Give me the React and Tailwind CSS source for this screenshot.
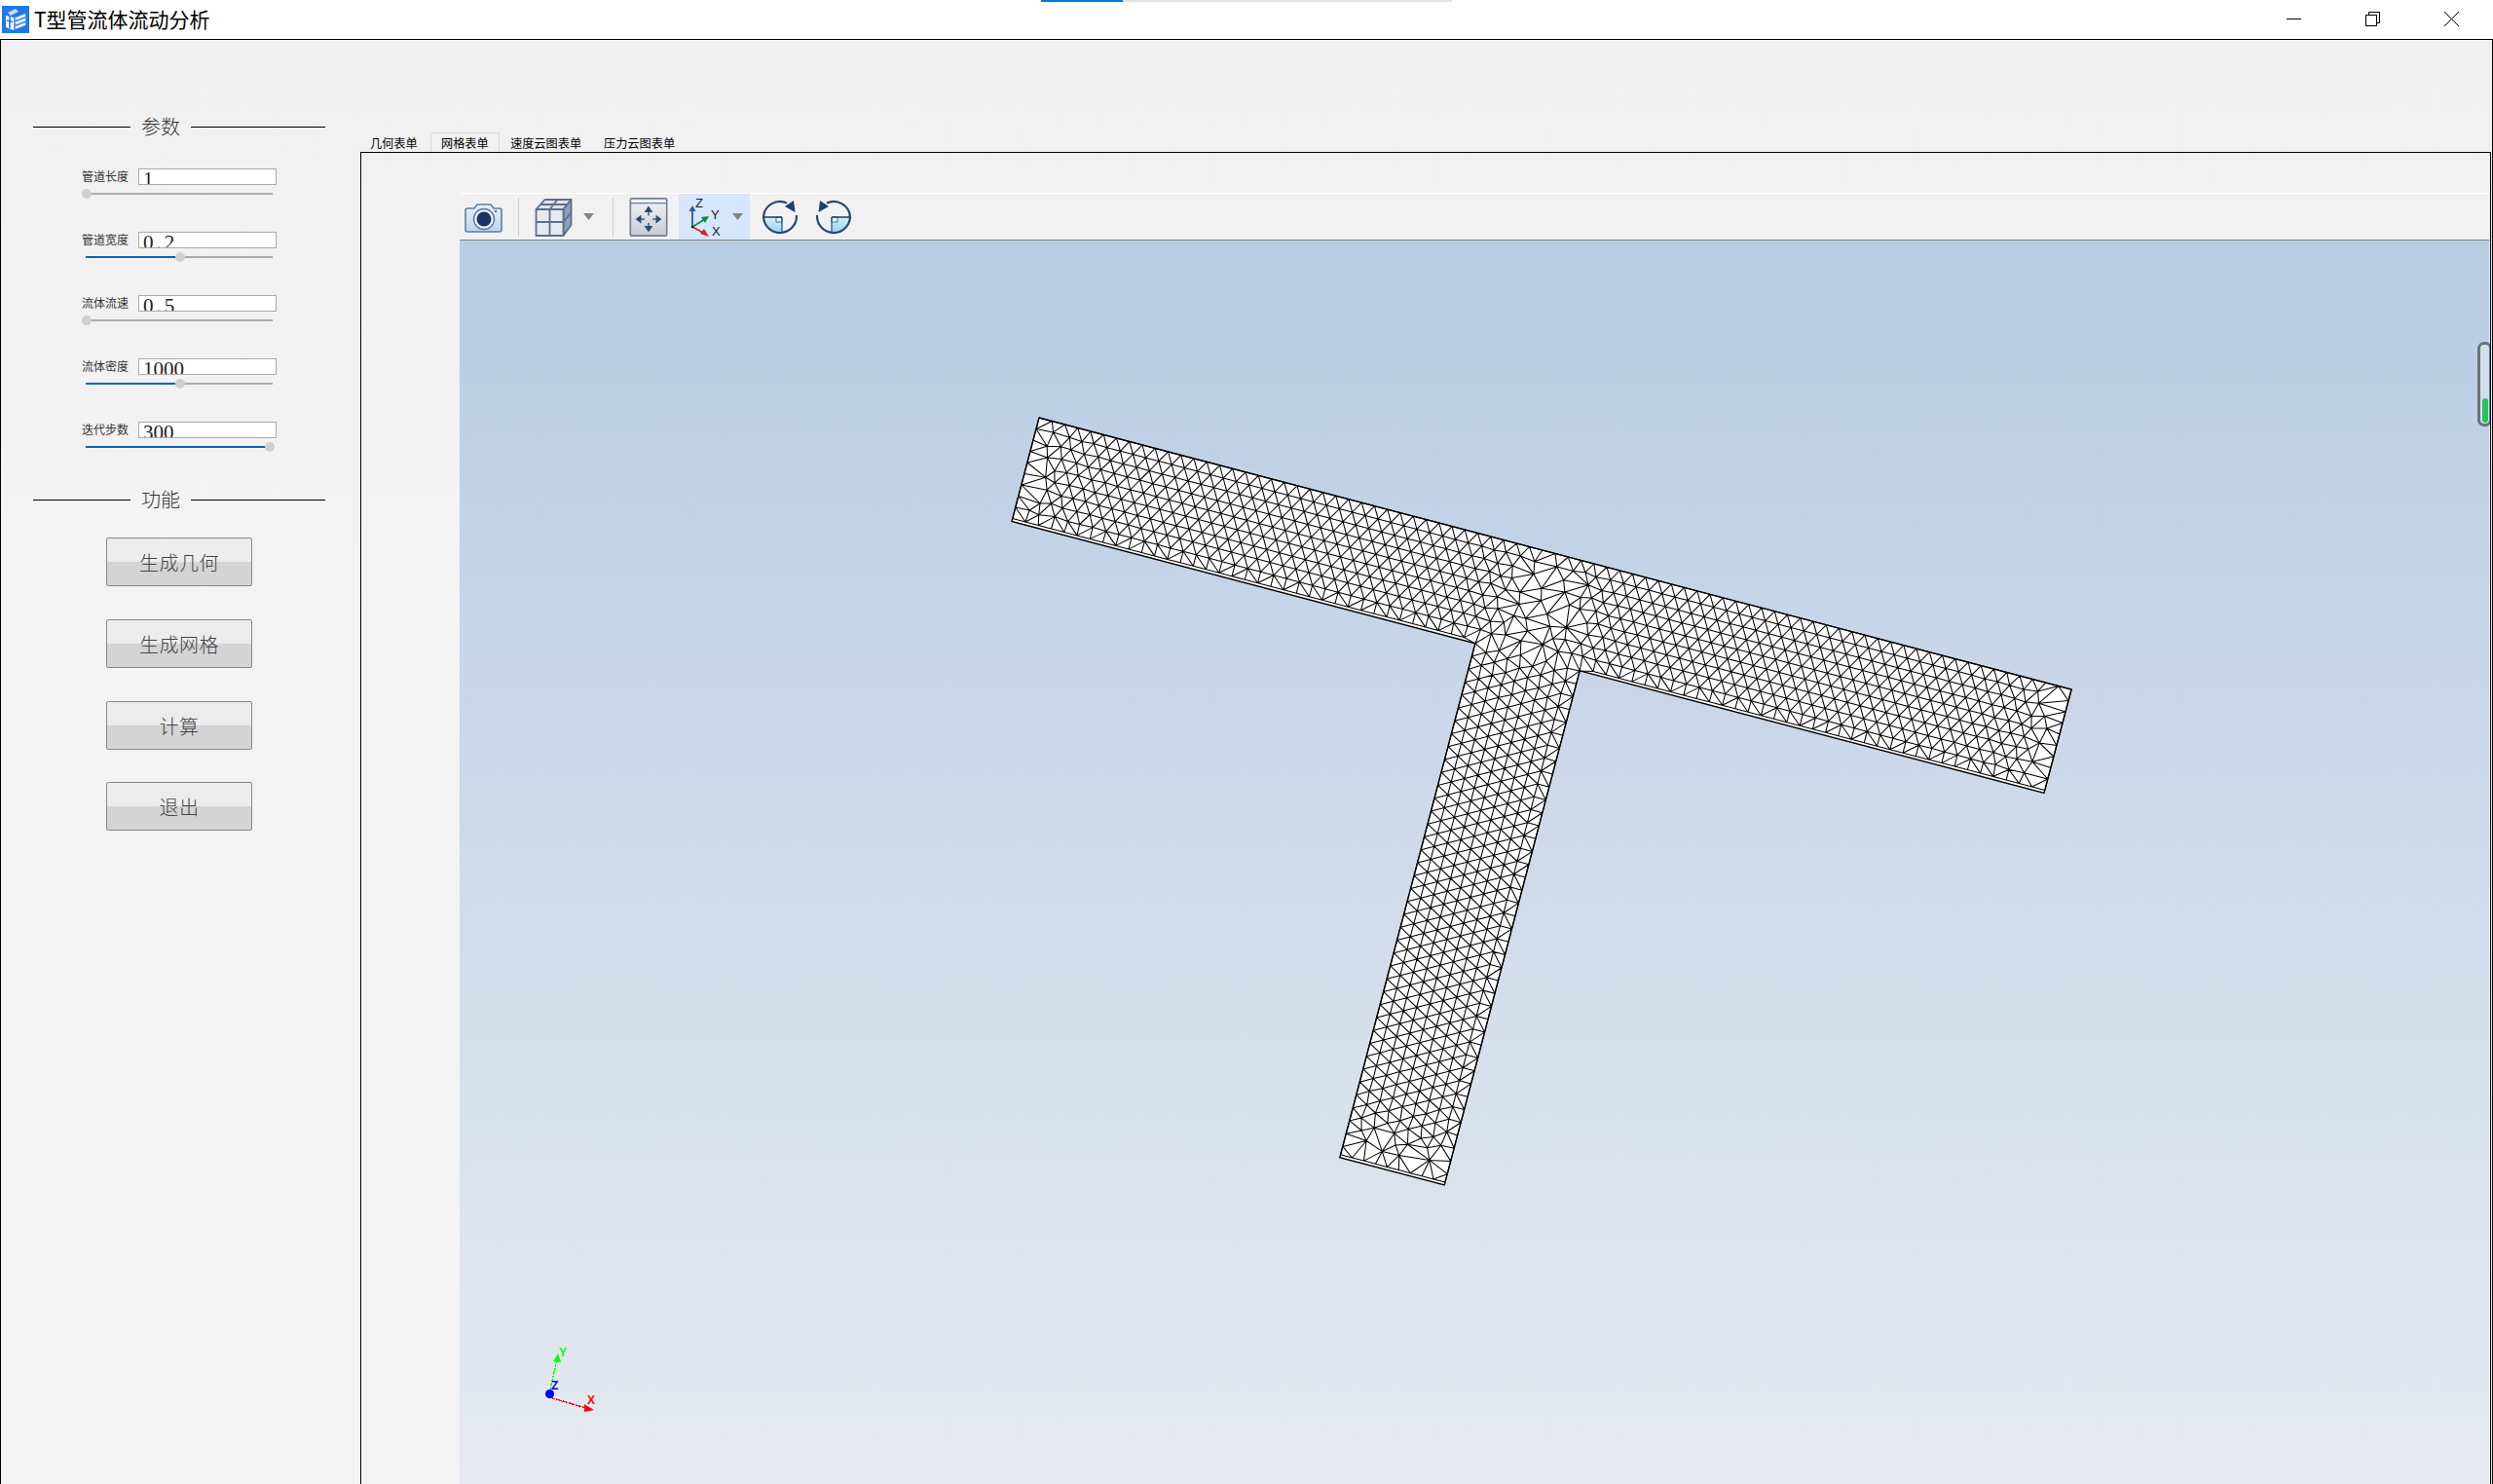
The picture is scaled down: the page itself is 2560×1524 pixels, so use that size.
import React, { useMemo } from "react";

const O = [1067, 429];
const U = [0.9672, 0.2546];
const V = [-0.2546, 0.9672];
const toXY = (u, v) => [O[0] + u * U[0] + v * V[0], O[1] + u * U[1] + v * V[1]];
const L = 1096, W = 110, S0 = 492, S1 = 603, SB = 656;
const STEP = 13.7;

function buildMesh() {
  const pts = [];
  const add = (u, v, minD) => {
    for (const p of pts) {
      const dx = p[0] - u, dy = p[1] - v;
      if (dx * dx + dy * dy < minD * minD) return;
    }
    pts.push([u, v]);
  };
  const rowH = 107 / 9;
  const stemStep = (S1 - S0) / 9;
  for (let u = 0; u <= L + 0.1; u += STEP) add(u, 0, 4);
  for (let u = 0; u <= L; u += STEP) if (u < S0 - 8 || u > S1 + 8) add(u, 107, 4);
  add(S0, W, 1); add(S1, W, 1);
  for (let j = 0; j <= 9; j++) { add(0, j * rowH, 4); add(L, j * rowH, 4); }
  for (let v = W + STEP; v < 653; v += STEP) { add(S0, v, 4); add(S1, v, 4); }
  for (let i = 0; i <= 9; i++) add(S0 + i * stemStep, 653, 4);
  const zone = (u, v) => {
    const dj = Math.hypot(u - (S0 + S1) / 2, (v - W / 2) * 0.9);
    const j = Math.exp(-Math.pow(dj / 58, 2));
    const e = Math.max(Math.exp(-u / 32), Math.exp(-(L - u) / 32), v > W ? Math.exp(-(653 - v) / 32) : 0);
    return [j, e];
  };
  const inner = (u, v) => {
    const [j, e] = zone(u, v);
    const a = 4 * j + 5.5 * e;
    const uu = u + a * Math.sin(u * 0.13 + v * 0.21);
    const vv = v + a * 0.7 * Math.cos(u * 0.17 - v * 0.11);
    add(uu, vv, 9.5 + 2.2 * j + 2 * e);
  };
  for (let j = 1; j < 9; j++) {
    const off = j % 2 ? STEP / 2 : 0;
    for (let u = off + STEP; u < L - 4; u += STEP) inner(u, j * rowH);
  }
  for (let i = 1; i < 9; i++) {
    const off = i % 2 ? STEP / 2 : 0;
    for (let v = W + off; v < 646; v += STEP) inner(S0 + i * stemStep, v);
  }
  const P = pts.map((p, i) => [p[0] + ((i * 7) % 11) * 1e-3, p[1] + ((i * 13) % 7) * 1e-3]);
  const n = P.length;
  P.push([-5000, -5000], [8000, -5000], [500, 9000]);
  const circ = (a, b, c) => {
    const [ax, ay] = P[a], [bx, by] = P[b], [cx, cy] = P[c];
    const d = 2 * (ax * (by - cy) + bx * (cy - ay) + cx * (ay - by));
    const A = ax * ax + ay * ay, B = bx * bx + by * by, C = cx * cx + cy * cy;
    const x = (A * (by - cy) + B * (cy - ay) + C * (ay - by)) / d;
    const y = (A * (cx - bx) + B * (ax - cx) + C * (bx - ax)) / d;
    return { a, b, c, x, y, r: (ax - x) ** 2 + (ay - y) ** 2 };
  };
  let tris = [circ(n, n + 1, n + 2)];
  for (let i = 0; i < n; i++) {
    const [px, py] = P[i];
    const keep = [];
    const edges = new Map();
    for (const t of tris) {
      if ((px - t.x) ** 2 + (py - t.y) ** 2 < t.r) {
        for (const [s, e] of [[t.a, t.b], [t.b, t.c], [t.c, t.a]]) {
          const k = s < e ? s * 100000 + e : e * 100000 + s;
          if (edges.has(k)) edges.set(k, null);
          else edges.set(k, [s, e]);
        }
      } else keep.push(t);
    }
    for (const ed of edges.values()) if (ed) keep.push(circ(ed[0], ed[1], i));
    tris = keep;
  }
  const inside = (u, v) =>
    (u >= 0 && u <= L && v >= 0 && v <= W) || (u >= S0 && u <= S1 && v >= W - 1 && v <= SB);
  const seen = new Set();
  let d = "";
  for (const t of tris) {
    if (t.a >= n || t.b >= n || t.c >= n) continue;
    const a = P[t.a], b = P[t.b], c = P[t.c];
    const area = Math.abs((b[0] - a[0]) * (c[1] - a[1]) - (c[0] - a[0]) * (b[1] - a[1])) / 2;
    if (area < 6) continue;
    if (!inside((a[0] + b[0] + c[0]) / 3, (a[1] + b[1] + c[1]) / 3)) continue;
    for (const [s, e] of [[t.a, t.b], [t.b, t.c], [t.c, t.a]]) {
      const k = s < e ? s * 100000 + e : e * 100000 + s;
      if (seen.has(k)) continue;
      seen.add(k);
      const p = toXY(P[s][0], P[s][1]), q = toXY(P[e][0], P[e][1]);
      d += `M${p[0].toFixed(1)} ${p[1].toFixed(1)}L${q[0].toFixed(1)} ${q[1].toFixed(1)}`;
    }
  }
  return d;
}

const outline = [[0, 0], [L, 0], [L, W], [S1, W], [S1, SB], [S0, SB], [S0, W], [0, W]]
  .map(([u, v]) => toXY(u, v).map((n) => n.toFixed(1)).join(","))
  .join(" ");

function Viewport() {
  const mesh = useMemo(buildMesh, []);
  return (
    <svg className="absolute inset-0 w-full h-full" viewBox="472 247 2084 1277">
      <polygon points={outline} fill="#ffffff" stroke="#000000" strokeWidth="1.4" />
      <path d={mesh} fill="none" stroke="#000000" strokeWidth="1.05" />
      <g shapeRendering="crispEdges">
        <line x1="564" y1="1431" x2="572" y2="1396" stroke="#00ff00" strokeWidth="1.4" strokeDasharray="3 1" />
        <line x1="564" y1="1435" x2="602" y2="1446" stroke="#ff0000" strokeWidth="1.4" strokeDasharray="6 1" />
      </g>
      <polygon points="573,1390 568,1398 576,1399" fill="#00ff00" />
      <polygon points="610,1448 600,1442 600,1450" fill="#ff0000" />
      <circle cx="564.5" cy="1431.5" r="4.5" fill="#0000ff" />
      <text x="574" y="1393" fontSize="12" fontWeight="700" fill="#00ff00" fontFamily="'Liberation Sans',sans-serif">Y</text>
      <text x="566" y="1427" fontSize="12" fontWeight="700" fill="#0000ff" fontFamily="'Liberation Sans',sans-serif">Z</text>
      <text x="603" y="1442" fontSize="12" fontWeight="700" fill="#ff0000" fontFamily="'Liberation Sans',sans-serif">X</text>
    </svg>
  );
}

function Heading({ children }) {
  return (
    <div className="flex items-center h-6 ml-[33px]">
      <div className="w-[100px] h-px bg-black" />
      <div className="w-[40px] ml-[11px] text-[20px] leading-6 text-[#333] font-light whitespace-nowrap">{children}</div>
      <div className="w-[138px] ml-[11px] h-px bg-black" />
    </div>
  );
}

function Param({ label, value, pos, tracked }) {
  return (
    <div className="mb-[33px] ml-[83px]">
      <div className="flex items-center h-[17px]">
        <div className="w-[58px] text-[12px] leading-[17px] text-[#333] whitespace-nowrap -mt-[2px]">{label}</div>
        <div className={"w-[142px] h-[17px] bg-white border border-[#aaaaaa] pl-1 overflow-hidden font-['Liberation_Serif',serif] text-[21px] leading-[20px] text-[#222] " + (tracked ? "tracking-[3px]" : "")}>
          {value}
        </div>
      </div>
      <div className="relative mt-[3px] h-3 w-[200px]">
        <div className="absolute left-[4px] top-[5px] w-[192px] h-[2px] bg-[#aaaaaa]" />
        <div className="absolute left-[4px] top-[5px] h-[2px] bg-[#0a64b4]" style={{ width: pos }} />
        <div className="absolute top-[1px] w-[10px] h-[10px] rounded-full bg-[#cfcfcf]" style={{ left: pos }} />
      </div>
    </div>
  );
}

function Btn({ children, mt }) {
  return (
    <div className={"ml-[108px] w-[150px] h-[50px] rounded-[2px] border border-[#888888] bg-linear-to-b from-[#ececec] from-50% to-[#d4d4d4] to-50% flex items-center justify-center text-[20px] text-[#444] font-light " + mt}>
      <span className="mt-[1px] tracking-[0.5px]">{children}</span>
    </div>
  );
}

const Tri = ({ ml }) => (
  <svg width="11" height="7" viewBox="0 0 11 7" className={"shrink-0 " + ml}>
    <polygon points="0,0 11,0 5.5,7" fill="#858585" />
  </svg>
);

const Sep = ({ ml }) => <div className={"w-px h-10 bg-[#cfcfcf] shrink-0 " + ml} />;

function CameraIcon() {
  return (
    <svg width="40" height="36" viewBox="0 0 38 36" className="shrink-0 ml-[5px]">
      <defs>
        <linearGradient id="camb" x1="0" y1="0" x2="0" y2="1">
          <stop offset="0" stopColor="#e8f0f8" />
          <stop offset="1" stopColor="#bcd6ee" />
        </linearGradient>
      </defs>
      <path d="M2 9 h7 l3 -4 h14 l3 4 h6 a2 2 0 0 1 2 2 v20 a2 2 0 0 1 -2 2 h-33 a2 2 0 0 1 -2 -2 v-20 a2 2 0 0 1 2 -2 z" fill="url(#camb)" stroke="#5f7ea6" strokeWidth="1.6" />
      <circle cx="19" cy="20" r="10.5" fill="#e8eff7" stroke="#5a7aa4" strokeWidth="1.4" />
      <circle cx="19" cy="20" r="7.5" fill="#1a3360" />
      <circle cx="31" cy="12" r="1.3" fill="#5a7aa4" />
    </svg>
  );
}

function CubeIcon() {
  return (
    <svg width="39" height="40" viewBox="0 0 38 40" className="shrink-0 ml-[16px]">
      <g stroke="#5c6f8e" strokeWidth="1.8" strokeLinejoin="round" fill="none">
        <path d="M1 12 L10 2 H37 L29 12 Z" fill="#dfe4ea" />
        <path d="M29 12 L37 2 V28 L29 39 Z" fill="#8fa0b8" />
        <path d="M1 12 H29 V39 H1 Z" fill="#e6e9ed" />
        <path d="M15 12 V39 M1 25 H29 M29 25 L37 15 M15 12 L23 2 M6 7 H33" />
      </g>
    </svg>
  );
}

function FitIcon() {
  return (
    <svg width="40" height="40" viewBox="0 0 38 39" className="shrink-0 ml-[16px]">
      <defs>
        <linearGradient id="fitb" x1="0" y1="0" x2="0" y2="1">
          <stop offset="0" stopColor="#f2f4f6" />
          <stop offset="1" stopColor="#c8ccd2" />
        </linearGradient>
      </defs>
      <rect x="0.8" y="0.8" width="36.4" height="37.4" rx="1.5" fill="url(#fitb)" stroke="#6e7f98" strokeWidth="1.6" />
      <line x1="1" y1="5.5" x2="37" y2="5.5" stroke="#6e7f98" strokeWidth="1.4" />
      <g fill="#2b4a78" stroke="#2b4a78" strokeWidth="1.3">
        <line x1="19" y1="13" x2="19" y2="18" />
        <polygon points="19,9.5 16,14 22,14" />
        <line x1="19" y1="25" x2="19" y2="30" />
        <polygon points="19,33.5 16,29 22,29" />
        <line x1="10" y1="21.5" x2="15" y2="21.5" />
        <polygon points="7,21.5 11,18.5 11,24.5" />
        <line x1="23" y1="21.5" x2="28" y2="21.5" />
        <polygon points="31,21.5 27,18.5 27,24.5" />
      </g>
    </svg>
  );
}

function AxesIcon() {
  return (
    <svg width="38" height="40" viewBox="0 0 38 40" className="shrink-0 ml-[10px]">
      <line x1="4" y1="30" x2="4" y2="12" stroke="#2f55a4" strokeWidth="1.8" />
      <polygon points="4,8 0.5,14 7.5,14" fill="#2f55a4" />
      <line x1="4" y1="30" x2="17" y2="22" stroke="#138a3c" strokeWidth="1.8" />
      <polygon points="21,19 13,20 17,26" fill="#138a3c" />
      <line x1="4" y1="30" x2="17" y2="37" stroke="#e0201c" strokeWidth="1.8" />
      <polygon points="21,40 12,37 16,32" fill="#e0201c" />
      <circle cx="4" cy="30" r="1.2" fill="#111" />
      <text x="7" y="10" fontSize="13" fill="#222" fontFamily="'Liberation Sans',sans-serif">Z</text>
      <text x="23" y="22" fontSize="13" fill="#222" fontFamily="'Liberation Sans',sans-serif">Y</text>
      <text x="24" y="39" fontSize="13" fill="#222" fontFamily="'Liberation Sans',sans-serif">X</text>
    </svg>
  );
}

function RotateIcon({ ml, flip, id }) {
  return (
    <svg width="36" height="38" viewBox="0 0 36 38" className={"shrink-0 " + ml + (flip ? " -scale-x-100" : "")}>
      <defs>
        <linearGradient id={id} x1="0" y1="0" x2="0" y2="1">
          <stop offset="0" stopColor="#d9f0fa" />
          <stop offset="1" stopColor="#8fd0ee" />
        </linearGradient>
      </defs>
      <path d="M1 19 A17 17 0 0 0 20 36 L20 19 Z" fill={`url(#${id})`} />
      <path d="M14 19 h6 v5 h-6 z" fill="#eef8fc" stroke="#2f6f98" strokeWidth="1" />
      <line x1="1" y1="19" x2="20" y2="19" stroke="#27476e" strokeWidth="1.6" />
      <line x1="20" y1="19" x2="20" y2="36" stroke="#27476e" strokeWidth="1.2" />
      <path d="M25 4.5 A17 17 0 0 0 1 19 A17 17 0 1 0 35 17" fill="none" stroke="#27476e" strokeWidth="2.2" />
      <polygon points="32,2 33.5,14 23,8" fill="#1d3f6e" />
    </svg>
  );
}

function LogoIcon() {
  return (
    <svg width="28" height="28" viewBox="0 0 28 28" className="shrink-0 ml-[2px]">
      <rect width="28" height="28" fill="#1f78e6" />
      <polygon points="6,7 14,3 17,6 9,10" fill="#c8dcf6" />
      <polygon points="4,10 12,12 12,25 4,22" fill="#ffffff" />
      <polygon points="12,12 25,7 25,20 12,25" fill="#4d97ee" />
      <g stroke="#ffffff" strokeWidth="2.2">
        <line x1="14" y1="13.5" x2="24" y2="9.5" />
        <line x1="14" y1="18" x2="24" y2="14" />
        <line x1="14" y1="22.5" x2="24" y2="18.5" />
      </g>
      <g stroke="#1f78e6" strokeWidth="1.6">
        <line x1="5" y1="15" x2="11" y2="16.5" />
        <line x1="8" y1="11" x2="8" y2="23" />
      </g>
    </svg>
  );
}

export default function App() {
  return (
    <div className="relative w-[2560px] h-[1524px] overflow-hidden bg-white flex flex-col font-['Noto_Sans_CJK_SC','Noto_Sans',sans-serif]">
      <div className="h-10 shrink-0 flex items-center bg-white">
        <LogoIcon />
        <div className="ml-[5px] mb-[2px] text-[21px] leading-6 text-black whitespace-nowrap">T型管流体流动分析</div>
        <div className="ml-auto flex items-center h-full">
          <svg width="15" height="15" viewBox="0 0 15 15" className="mr-[66px] mb-[2px]">
            <line x1="0" y1="7.5" x2="15" y2="7.5" stroke="#000" strokeWidth="1" />
          </svg>
          <svg width="15" height="15" viewBox="0 0 15 15" className="mr-[66px] mb-[1px]">
            <path d="M3.5 3V0.5H14.5V11.5H11.5" fill="none" stroke="#000" strokeWidth="1" />
            <rect x="0.5" y="3.5" width="11" height="11" fill="none" stroke="#000" strokeWidth="1" />
          </svg>
          <svg width="15" height="15" viewBox="0 0 15 15" className="mr-[35px] mb-[1px]">
            <path d="M0 0L15 15M15 0L0 15" fill="none" stroke="#000" strokeWidth="1" />
          </svg>
        </div>
      </div>
      <div className="absolute left-[1069px] top-0 w-[422px] h-[2px] bg-[#e2e2e2]">
        <div className="w-[84px] h-[2px] bg-[#0078d4]" />
      </div>
      <div className="flex-1 min-h-0 flex border border-b-0 border-black bg-linear-to-b from-[#f0f0f0] to-[#f3f3f3] to-40%">
        <div className="w-[369px] shrink-0 pt-[77px]">
          <Heading>参数</Heading>
          <div className="mt-[31px]">
            <Param label="管道长度" value="1" pos={0} />
            <Param label="管道宽度" value="0.2" pos={96} tracked />
            <Param label="流体流速" value="0.5" pos={0} tracked />
            <Param label="流体密度" value="1000" pos={96} />
            <Param label="迭代步数" value="300" pos={188} />
          </div>
          <div className="pt-[3px]">
            <Heading>功能</Heading>
          </div>
          <Btn mt="mt-[27px]">生成几何</Btn>
          <Btn mt="mt-[34px]">生成网格</Btn>
          <Btn mt="mt-[34px]">计算</Btn>
          <Btn mt="mt-[33px]">退出</Btn>
        </div>
        <div className="flex-1 min-w-0 flex flex-col pt-[95px] mr-px">
          <div className="flex h-5 shrink-0 text-[12.2px] leading-[22px] text-black">
            <div className="w-[72px] pl-[10px] whitespace-nowrap">几何表单</div>
            <div className="w-[71px] pl-[10px] border border-b-0 border-[#dddddd] leading-[21px] whitespace-nowrap">网格表单</div>
            <div className="w-[96px] pl-[11px] whitespace-nowrap">速度云图表单</div>
            <div className="w-[96px] pl-[11px] whitespace-nowrap">压力云图表单</div>
          </div>
          <div className="relative flex-1 min-h-0 overflow-hidden border-l border-t border-r border-black pl-[101px] pr-px pt-[41px] flex flex-col">
            <div className="h-[49px] shrink-0 flex items-center bg-[#f1f1f1] border-t border-white border-b border-b-[#888888]">
              <CameraIcon />
              <Sep ml="ml-[15px]" />
              <CubeIcon />
              <Tri ml="ml-[11px]" />
              <Sep ml="ml-[19px]" />
              <FitIcon />
              <div className="ml-[11px] w-[73px] h-full bg-[#d6e6fc] flex items-center shrink-0">
                <AxesIcon />
                <Tri ml="ml-[7px]" />
              </div>
              <RotateIcon ml="ml-[13px]" id="rotA" />
              <RotateIcon ml="ml-[19px]" flip id="rotB" />
            </div>
            <div className="relative flex-1 min-h-0 bg-linear-to-b from-[#b8cce4] to-[#e6e9ef]">
              <Viewport />
            </div>
            <div className="absolute right-[-2px] top-[194px] w-[15px] h-[87px] rounded-[7px] border-[3px] border-[#6d7278] bg-[#d0dfee]">
              <div className="absolute left-[2px] bottom-[1px] w-[6px] h-[25px] rounded-[3px] bg-[#22c35e]" />
            </div>
          </div>
        </div>
      </div>
    </div>
  );
}
